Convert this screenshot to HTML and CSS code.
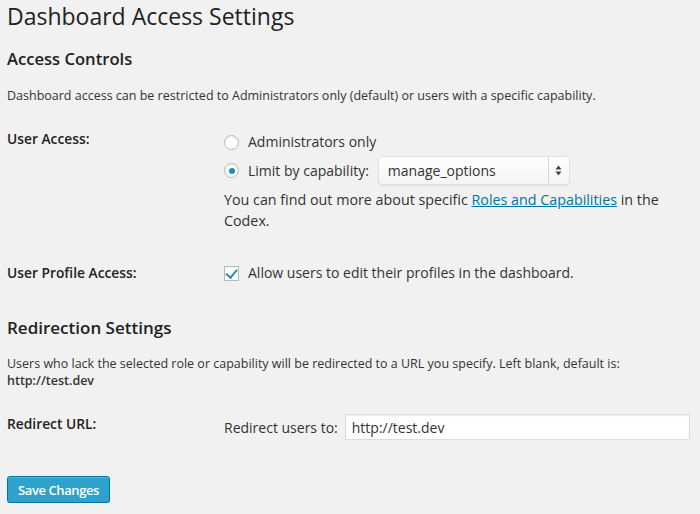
FILE: index.html
```html
<!DOCTYPE html>
<html lang="en">
<head>
    <meta charset="UTF-8">
    <title>Dashboard Access Settings</title>
    <link rel="stylesheet" href="styles.css">
</head>
<body>
    <div class="wrap">
        <h1>Dashboard Access Settings</h1>
        <form method="post">
            <h2>Access Controls</h2>
            <p class="desc">Dashboard access can be restricted to Administrators only (default) or users with a specific capability.</p>
            <div class="form-row access-row">
                <div class="row-label">User Access:</div>
                <div class="row-field options">
                    <label class="choice">
                        <input type="radio" name="access" value="admin">
                        <span>Administrators only</span>
                    </label>
                    <label class="choice">
                        <input type="radio" name="access" value="cap" checked>
                        <span>Limit by capability:</span>
                        <span class="select-box">
                            <select name="capability">
                                <option>manage_options</option>
                            </select>
                            <span class="select-arrows">
                                <svg width="7" height="11" viewBox="0 0 7 11"><path d="M3.5 0.5L6.5 4.5H0.5Z M3.5 10.5L6.5 6.5H0.5Z" fill="#444"/></svg>
                            </span>
                        </span>
                    </label>
                    <p class="hint">You can find out more about specific <a href="#">Roles and Capabilities</a> in the Codex.</p>
                </div>
            </div>
            <div class="form-row profile-row">
                <div class="row-label">User Profile Access:</div>
                <div class="row-field">
                    <label class="choice">
                        <input type="checkbox" name="profile" checked>
                        <span>Allow users to edit their profiles in the dashboard.</span>
                    </label>
                </div>
            </div>
            <h2 class="second">Redirection Settings</h2>
            <p class="desc tight">Users who lack the selected role or capability will be redirected to a URL you specify. Left blank, default is: <br><b>http://test.dev</b></p>
            <div class="form-row url-row">
                <div class="row-label">Redirect URL:</div>
                <div class="row-field url-field">
                    <label for="redirect">Redirect users to:</label>
                    <input type="text" id="redirect" value="http://test.dev">
                </div>
            </div>
            <button type="submit" class="save-btn">Save Changes</button>
        </form>
    </div>
</body>
</html>
```

FILE: styles.css
```css
body {
    margin: 0;
    background: #f1f1f1;
    color: #333;
    font-family: 'Open Sans', 'Noto Sans', sans-serif;
    font-size: 14px;
}
.wrap {
    padding: 0 10px 0 7px;
}
h1 {
    margin: 0;
    font-size: 23px;
    font-weight: 400;
    line-height: 33px;
    color: #222;
}
h2 {
    margin: 13px 0 0 0;
    font-size: 16.6px;
    font-weight: 600;
    line-height: 26px;
    color: #222;
}
h2.second {
    margin-top: 32px;
    font-size: 17px;
}
.desc {
    margin: 15px 0 0 0;
    font-size: 12.5px;
    line-height: 17px;
}
.desc.tight {
    margin-top: 14px;
}
.desc b {
    font-weight: 600;
}
/* rows of the settings table */
.form-row {
    display: grid;
    grid-template-columns: 217px 1fr;
}
.access-row {
    margin-top: 25px;
}
.profile-row {
    margin-top: 32px;
}
.url-row {
    margin-top: 25px;
}
.row-label {
    font-size: 13.8px;
    font-weight: 600;
    color: #222;
    line-height: 20px;
}
.row-field {
    display: flex;
    flex-direction: column;
}
.options {
    padding-top: 3px;
    gap: 4px;
}
.choice {
    display: flex;
    align-items: center;
    gap: 9px;
    line-height: 20px;
}
.choice input[type="radio"],
.choice input[type="checkbox"] {
    appearance: none;
    -webkit-appearance: none;
    margin: 0;
    width: 15px;
    height: 15px;
    border: 1px solid #b4b9be;
    background: #fff;
    box-shadow: inset 0 1px 2px rgba(0, 0, 0, 0.07);
    display: grid;
    place-items: center;
    flex: none;
}
.choice input[type="radio"] {
    border-radius: 50%;
}
.choice input[type="radio"]:checked::before {
    content: "";
    width: 6px;
    height: 6px;
    border-radius: 50%;
    background: #1e8cbe;
}
.choice input[type="checkbox"]:checked::before {
    content: "";
    width: 5px;
    height: 9px;
    border: solid #1e8cbe;
    border-width: 0 2px 2px 0;
    transform: translate(0, -1px) rotate(40deg);
}
.select-box {
    position: relative;
    display: inline-block;
}
.select-box select {
    appearance: none;
    -webkit-appearance: none;
    width: 192px;
    height: 29px;
    padding: 0 30px 0 9px;
    border: 1px solid #e0e0e0;
    border-radius: 4px;
    background: linear-gradient(#ffffff, #f4f4f4);
    box-shadow: 0 1px 1px rgba(0, 0, 0, 0.08);
    font-family: inherit;
    font-size: 14px;
    color: #333;
}
.select-arrows {
    position: absolute;
    top: 1px;
    right: 1px;
    bottom: 1px;
    width: 20px;
    border-left: 1px solid #d6d6d6;
    display: grid;
    place-items: center;
    pointer-events: none;
}
.hint {
    margin: 0;
    font-size: 14.3px;
    line-height: 21px;
}
.hint a {
    color: #0074a2;
}
.url-field {
    flex-direction: row;
    align-items: center;
    gap: 7px;
    margin-top: 0;
}
.url-field input {
    flex: 1;
    height: 26px;
    box-sizing: border-box;
    border: 1px solid #ddd;
    box-shadow: inset 0 1px 2px rgba(0, 0, 0, 0.07);
    background: #fff;
    padding: 0 6px;
    font-family: inherit;
    font-size: 14px;
    color: #333;
}
.save-btn {
    margin-top: 36px;
    background: #2ea2cc;
    border: 1px solid #0074a2;
    border-radius: 3px;
    box-shadow: inset 0 1px 0 rgba(120, 200, 230, 0.5), 0 1px 0 rgba(0, 0, 0, 0.15);
    color: #fff;
    font-family: inherit;
    font-size: 13px;
    font-weight: 600;
    letter-spacing: -0.4px;
    height: 27px;
    padding: 0 10px;
    cursor: pointer;
}
```
